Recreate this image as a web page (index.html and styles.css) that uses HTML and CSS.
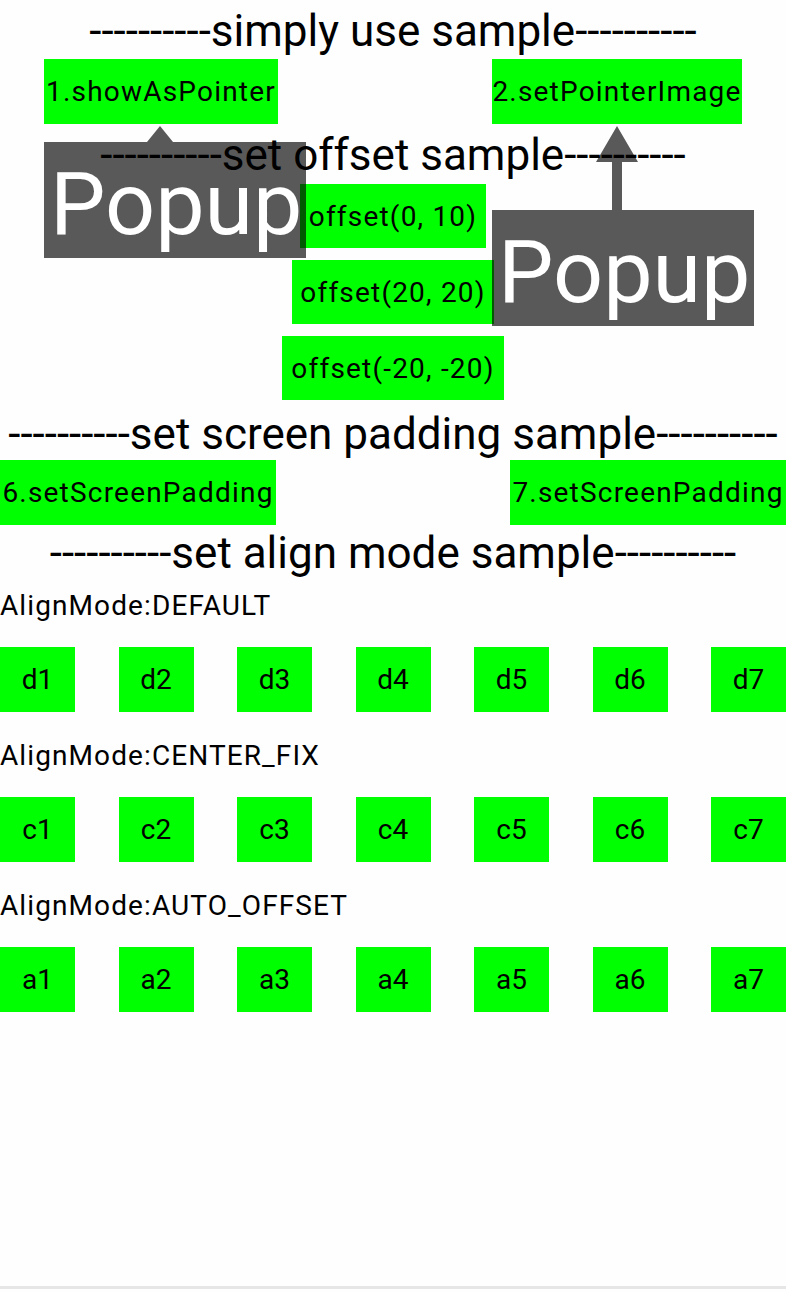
FILE: index.html
```html
<!DOCTYPE html>
<html lang="en">
<head>
    <meta charset="UTF-8">
    <meta name="viewport" content="width=device-width, initial-scale=1.0">
    <title>Popup samples</title>
    <link rel="stylesheet" href="styles.css">
</head>
<body>

    <div class="screen">
        <h2 class="heading first">----------simply use sample----------</h2>
        <div class="row row-simple">
            <div class="btn btn-pointer">1.showAsPointer</div>
            <div class="btn btn-image">2.setPointerImage</div>
        </div>

        <h2 class="heading">----------set offset sample----------</h2>
        <div class="offset-list">
            <div class="btn btn-offset-a">offset(0, 10)</div>
            <div class="btn btn-offset-b">offset(20, 20)</div>
            <div class="btn btn-offset-c">offset(-20, -20)</div>
        </div>

        <h2 class="heading heading-padding">----------set screen padding sample----------</h2>
        <div class="row">
            <div class="btn btn-padding">6.setScreenPadding</div>
            <div class="btn btn-padding">7.setScreenPadding</div>
        </div>

        <h2 class="heading heading-align">----------set align mode sample----------</h2>

        <div class="mode first-mode">AlignMode:DEFAULT</div>
        <div class="row cells">
            <div class="btn cell">d1</div>
            <div class="btn cell">d2</div>
            <div class="btn cell">d3</div>
            <div class="btn cell">d4</div>
            <div class="btn cell">d5</div>
            <div class="btn cell">d6</div>
            <div class="btn cell">d7</div>
        </div>

        <div class="mode">AlignMode:CENTER_FIX</div>
        <div class="row cells">
            <div class="btn cell">c1</div>
            <div class="btn cell">c2</div>
            <div class="btn cell">c3</div>
            <div class="btn cell">c4</div>
            <div class="btn cell">c5</div>
            <div class="btn cell">c6</div>
            <div class="btn cell">c7</div>
        </div>

        <div class="mode">AlignMode:AUTO_OFFSET</div>
        <div class="row cells">
            <div class="btn cell">a1</div>
            <div class="btn cell">a2</div>
            <div class="btn cell">a3</div>
            <div class="btn cell">a4</div>
            <div class="btn cell">a5</div>
            <div class="btn cell">a6</div>
            <div class="btn cell">a7</div>
        </div>

        <!-- popups shown over the page -->
        <div class="popup popup-pointer">
            <svg class="arrow arrow-small" width="26" height="16" viewBox="0 0 26 16">
                <path d="M13 0 L26 16 L0 16 Z"/>
            </svg>
            Popup
        </div>
        <div class="popup popup-image">
            <svg class="arrow arrow-big" width="44" height="84" viewBox="0 0 44 84">
                <path d="M22 0 L43 36 L27 36 L27 84 L17 84 L17 36 L1 36 Z"/>
            </svg>
            Popup
        </div>
    </div>

</body>
</html>
```

FILE: styles.css
```css
body {
    margin: 0;
    background: #fefefe;
    font-family: Roboto, "Liberation Sans", sans-serif;
    color: #000;
}
.screen {
    position: relative;
    height: 1289px;
    padding-top: 5px;
    box-sizing: border-box;
    border-bottom: 3px solid #e6e6e6;
    overflow: hidden;
}
.heading {
    margin: 5px 0 0;
    font-size: 44px;
    font-weight: normal;
    line-height: 52px;
    text-align: center;
    white-space: nowrap;
}
.heading.first {
    margin-top: 0;
}
.heading-padding {
    margin-top: 8px;
}
.heading-align {
    margin-top: 2px;
}
.row {
    display: flex;
    justify-content: space-between;
}
.row-simple {
    margin-top: 2px;
    padding: 0 44px;
}
.btn {
    display: flex;
    align-items: center;
    justify-content: center;
    height: 65px;
    background: #00ff00;
    font-size: 28px;
    letter-spacing: 1.2px;
    white-space: nowrap;
}
.btn-pointer {
    width: 234px;
}
.btn-image {
    width: 250px;
}
.offset-list {
    display: flex;
    flex-direction: column;
    align-items: center;
    gap: 12px;
    margin-top: 3px;
}
.offset-list .btn {
    height: 64px;
}
.btn-offset-a {
    width: 186px;
}
.btn-offset-b {
    width: 202px;
}
.btn-offset-c {
    width: 222px;
}
.btn-padding {
    width: 276px;
}
.mode {
    margin-top: 27px;
    font-size: 28px;
    line-height: 33px;
    letter-spacing: 1.1px;
}
.mode.first-mode {
    margin-top: 10px;
}
.cells {
    margin-top: 25px;
}
.cell {
    width: 75px;
    letter-spacing: 0;
}
.popup {
    position: absolute;
    width: 262px;
    height: 116px;
    box-sizing: border-box;
    padding: 10px 0 0 6px;
    background: rgba(0, 0, 0, 0.65);
    color: #fff;
    font-size: 88px;
    line-height: 1.172;
    white-space: nowrap;
}
.popup-pointer {
    left: 44px;
    top: 142px;
}
.popup-image {
    left: 492px;
    top: 210px;
}
.arrow {
    position: absolute;
    left: 103px;
    fill: rgba(0, 0, 0, 0.65);
}
.arrow-small {
    top: -16px;
}
.arrow-big {
    top: -84px;
}
```
